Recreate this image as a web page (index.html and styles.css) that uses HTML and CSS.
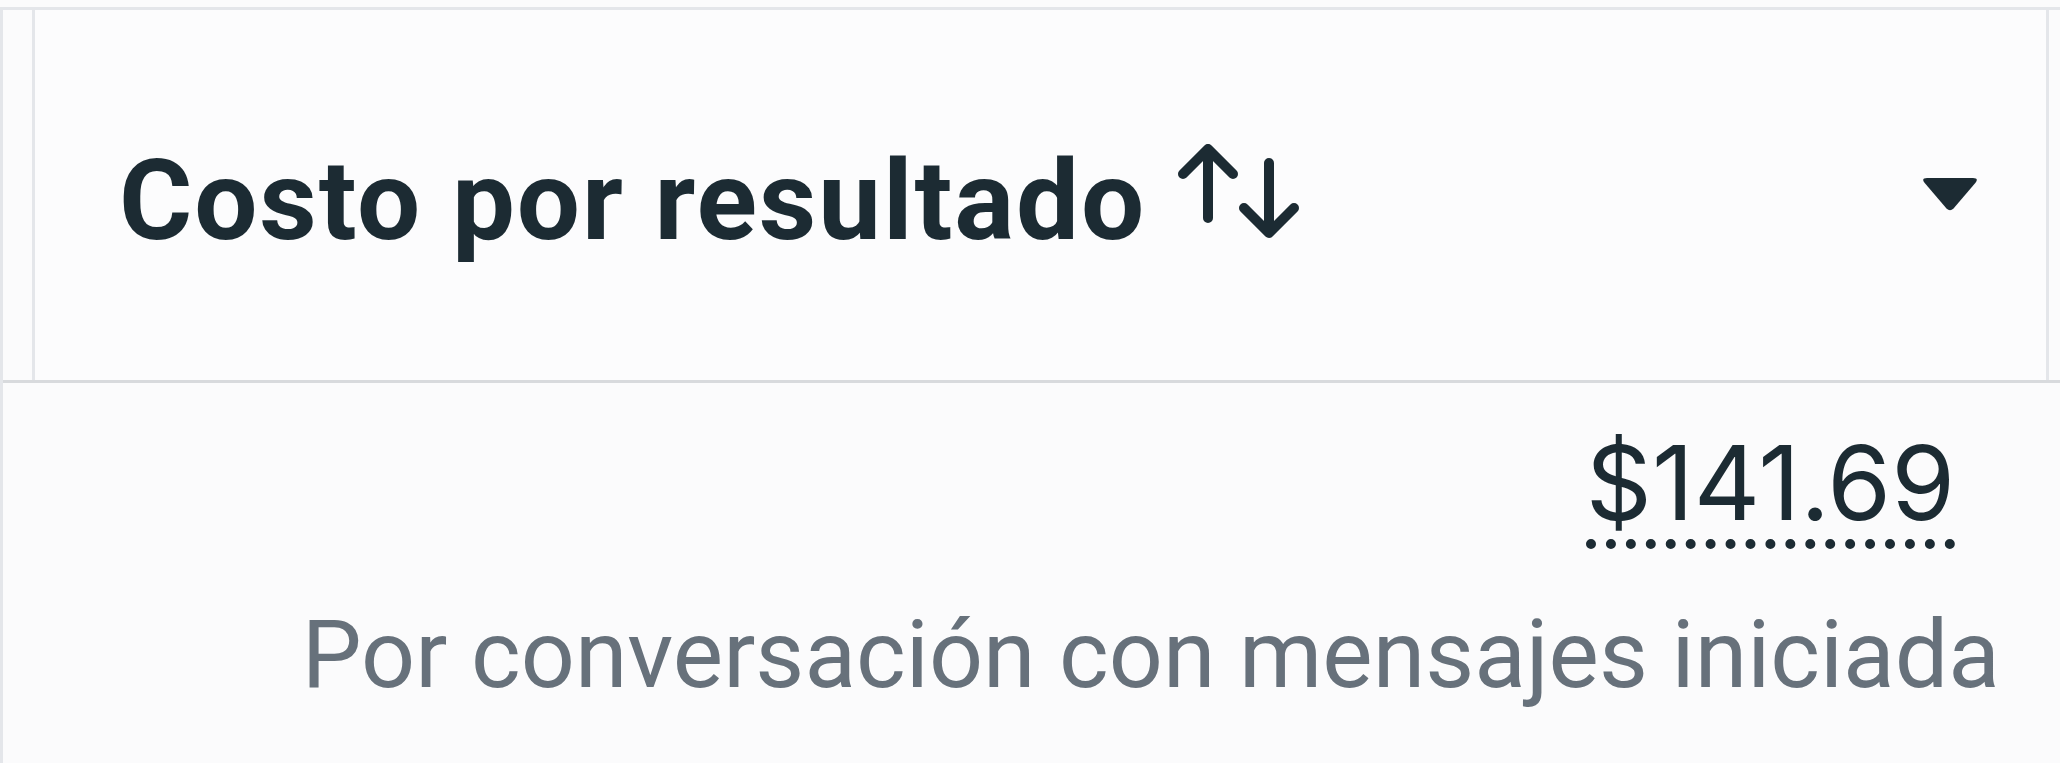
FILE: index.html
```html
<!DOCTYPE html>
<html lang="es">
<head>
<meta charset="utf-8">
<title>Costo por resultado</title>
<link rel="stylesheet" href="styles.css">
</head>
<body>
<div class="table">
  <div class="head-row">
    <div class="gutter"></div>
    <div class="head-cell">
      <div class="title-group">
        <span class="title">Costo por resultado</span>
        <svg class="sort-icon" width="124" height="100" viewBox="0 0 124 100" aria-hidden="true">
          <path d="M31 77 V8 M6 33 L31 8 L56 33" fill="none" stroke="#1c2b33" stroke-width="10" stroke-linecap="round" stroke-linejoin="round"/>
          <path d="M92 22 V92 M67 67 L92 92 L117 67" fill="none" stroke="#1c2b33" stroke-width="10" stroke-linecap="round" stroke-linejoin="round"/>
        </svg>
      </div>
      <svg class="caret" width="56" height="33" viewBox="0 0 56 33" aria-hidden="true">
        <path d="M5 0 H51 Q57 0 53.5 4.8 L31.5 30.5 Q28 34 24.5 30.5 L2.5 4.8 Q-1 0 5 0 Z" fill="#1c2b33"/>
      </svg>
    </div>
  </div>
  <div class="body-row">
    <div class="value-wrap"><span class="value">$141.69</span></div>
    <div class="subtitle">Por conversación con mensajes iniciada</div>
  </div>
</div>
</body>
</html>
```

FILE: styles.css
```css
html, body {
  margin: 0;
  padding: 0;
  background: #fbfbfc;
  height: 100%;
  overflow: hidden;
}

body {
  font-family: Roboto, "Liberation Sans", Arial, sans-serif;
  color: #1c2b33;
}

.table {
  margin-top: 7px;
  border-top: 3px solid #e4e6ea;
  border-left: 3px solid #e4e6ea;
  height: 100%;
}

.head-row {
  display: flex;
  height: 370px;
  border-bottom: 3px solid #d8dadd;
}

.gutter {
  width: 29px;
  flex: none;
}

.head-cell {
  flex: none;
  display: flex;
  align-items: flex-start;
  justify-content: space-between;
  border-left: 3px solid #e4e6ea;
  border-right: 3px solid #e4e6ea;
  padding: 0 68px 0 84px;
  box-sizing: border-box;
  width: 2017px;
  background: #fcfcfd;
}

.title-group {
  display: flex;
  align-items: flex-start;
  gap: 31px;
  padding-top: 133px;
}

.title {
  font-weight: 700;
  font-size: 112px;
  line-height: 115px;
  letter-spacing: 1.9px;
  white-space: nowrap;
}

.sort-icon {
  display: block;
  margin-top: -2px;
}

.caret {
  display: block;
  margin-top: 168px;
}

.body-row {
  display: flex;
  flex-direction: column;
  align-items: flex-end;
  padding-right: 60px;
}

.value-wrap {
  margin-top: 48px;
  margin-right: 45px;
}

.value {
  display: inline-block;
  font-family: Inter, Roboto, sans-serif;
  font-variant-numeric: proportional-nums;
  font-size: 103px;
  line-height: 103px;
  padding-bottom: 5px;
  border-bottom: 10px dotted #1c2b33;
  white-space: nowrap;
}

.subtitle {
  margin-top: 51px;
  font-size: 95px;
  line-height: 110px;
  color: #67717b;
  white-space: nowrap;
}
```
